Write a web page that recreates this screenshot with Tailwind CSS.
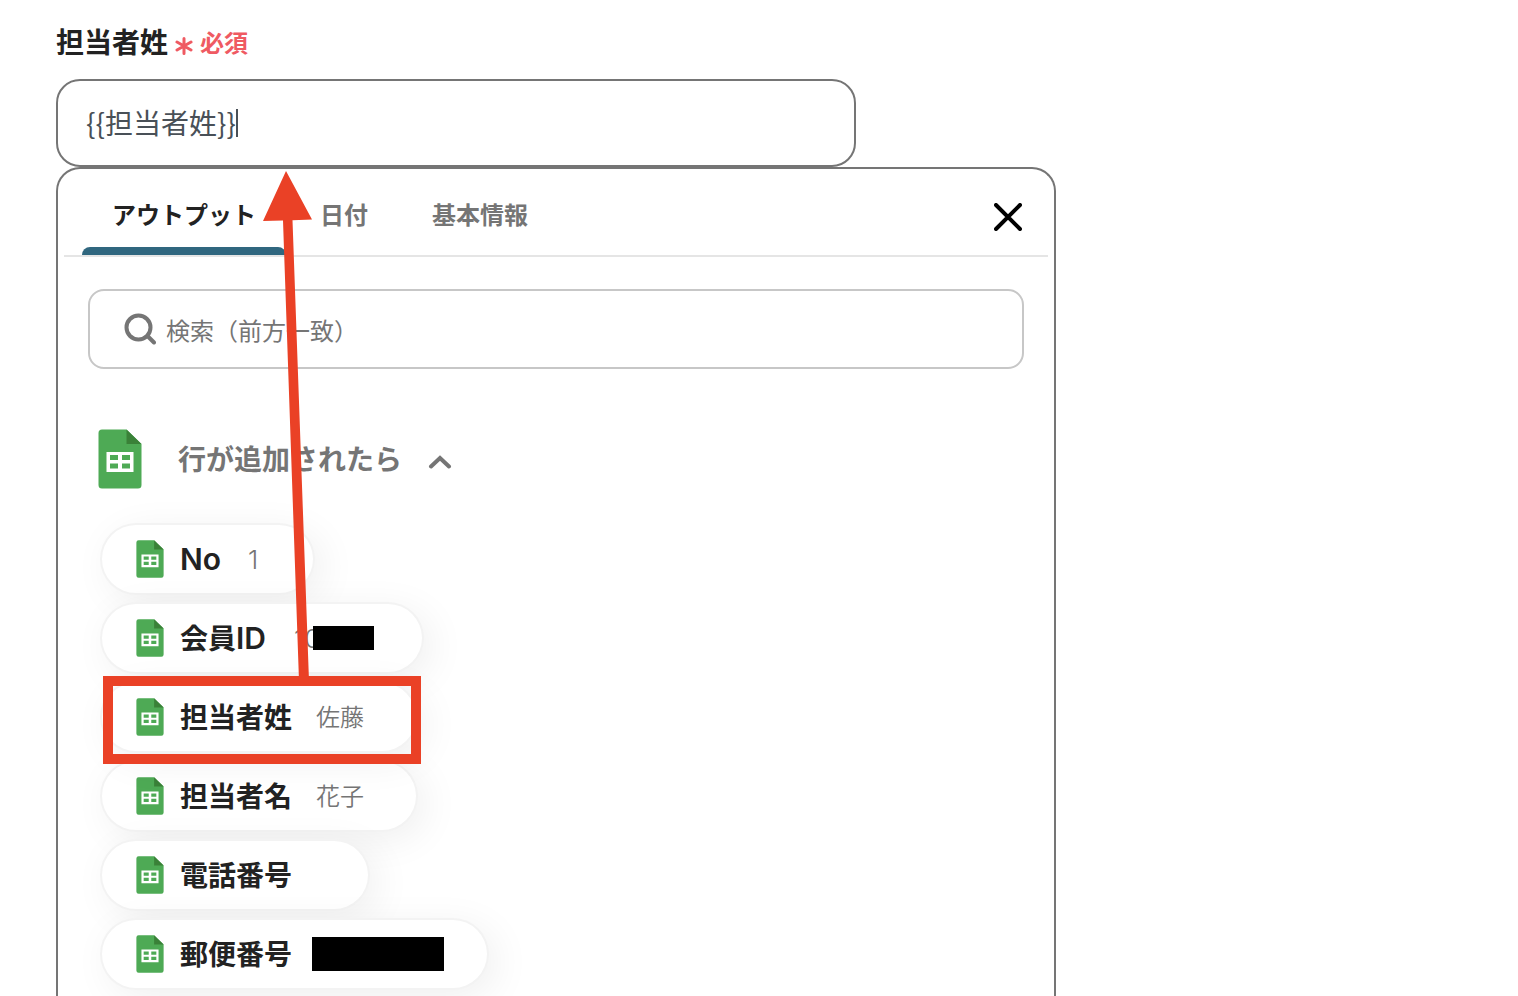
<!DOCTYPE html>
<html lang="ja">
<head>
<meta charset="utf-8">
<title>担当者姓</title>
<script src="https://cdn.jsdelivr.net/npm/@tailwindcss/browser@4"></script>
</head>
<body class="bg-white font-['Noto_Sans_CJK_JP',sans-serif] text-[#222]">
<svg class="hidden" aria-hidden="true">
  <symbol id="sheet" viewBox="0 0 44 60">
    <path fill="#4eaa55" d="M4 .5h24.500L43.500 15v41a3.500 3.500 0 0 1-3.500 3.500H4A3.500 3.500 0 0 1 .5 56V4A3.500 3.500 0 0 1 4 .5z"/>
    <path fill="#3a8138" d="M28.500.5L43.500 15h-15z"/>
    <path fill="#fff" fill-rule="evenodd" d="M8.500 23h27v20h-27zM12 26v5h8v-5zM24 26v5h8v-5zM12 34.500v5h8v-5zM24 34.500v5h8v-5z"/>
  </symbol>
</svg>
<main class="relative flex min-h-screen flex-col px-14 pt-[22px]">
  <label for="sei" class="flex h-[38px] items-center text-[28px] leading-[38px] font-bold">担当者姓
    <svg class="mt-2.5 ml-[7px] h-[18px] w-[18px]" viewBox="0 0 18 18" stroke="#ef5a62" stroke-width="3" stroke-linecap="round"><path d="M9 1.500v15M2 5l14 8M16 5L2 13"/></svg>
    <span class="ml-[7px] pt-0.5 text-2xl text-[#ef5a62]">必須</span>
  </label>
  <div class="relative mt-[19px] w-full max-w-[800px]">
    <input id="sei" type="text" value="{{担当者姓}}" class="block h-[88px] w-full rounded-3xl border-2 border-[#757575] pr-7 pb-0.5 pl-7 text-[28px] text-[#495057] outline-none">
    <span class="absolute top-[30px] left-[180px] h-7 w-0.5 bg-[#495057]"></span>
  </div>

  <section class="w-full max-w-[1000px] grow rounded-t-3xl border-2 border-b-0 border-[#757575] pb-2">
    <div class="mx-1.5 flex h-[88px] items-stretch border-b-2 border-[#e5e5e5] pl-4 text-2xl font-bold text-[#757575]" role="tablist">
      <button role="tab" aria-selected="true" class="relative px-8 pt-1 text-[#222]">
        <span>アウトプット</span>
        <span class="absolute inset-x-0.5 bottom-0 h-2 rounded-t-lg bg-[#30677f]"></span>
      </button>
      <button role="tab" aria-selected="false" class="px-8 pt-1">日付</button>
      <button role="tab" aria-selected="false" class="px-8 pt-1">基本情報</button>
      <button aria-label="閉じる" class="mr-5 ml-auto flex w-10 items-center justify-center pt-2.5">
        <svg class="h-7 w-7" viewBox="0 0 28 28" stroke="#000" stroke-width="4" stroke-linecap="round"><path d="M2 2l24 24M26 2L2 26"/></svg>
      </button>
    </div>

    <div class="relative mx-[30px] mt-8">
      <svg class="absolute top-6 left-9 h-8 w-8" viewBox="0 0 32 32" fill="none" stroke="#757575" stroke-width="4" stroke-linecap="round"><circle cx="14.500" cy="14.500" r="12"/><path d="M23.500 23l6.500 6.500"/></svg>
      <input type="search" aria-label="検索" placeholder="検索（前方一致）" class="block h-20 w-full rounded-2xl border-2 border-[#c7c7c7] pr-8 pl-[76px] text-2xl placeholder:text-[#757575]">
    </div>

    <button class="mt-[60px] ml-10 flex h-[60px] items-center text-[28px] font-bold text-[#757575]" aria-expanded="true">
      <svg class="h-[60px] w-11"><use href="#sheet"/></svg>
      <span class="ml-9 pb-0.5">行が追加されたら</span>
      <svg class="mt-1.5 ml-[26px] h-3.5 w-6" viewBox="0 0 24 14" fill="none" stroke="#757575" stroke-width="4" stroke-linecap="round" stroke-linejoin="miter"><path d="M3 11.500l9-8.500 9 8.500"/></svg>
    </button>

    <ul class="mt-9 ml-11 flex flex-col items-start gap-[11px] text-[28px] font-bold">
      <li><button class="flex h-[68px] items-center rounded-full bg-white pr-[52px] pl-[34px] shadow-[0_0_0_2px_#f3f3f3,8px_8px_40px_rgba(0,0,0,0.07)]">
        <svg class="h-[38px] w-7"><use href="#sheet"/></svg><span class="ml-4 font-[Inter] text-3xl font-semibold">No</span><span class="ml-6 w-4 text-center font-[Inter] text-[26px] font-light text-[#757575]">1</span></button></li>
      <li><button class="relative flex h-[68px] items-center rounded-full bg-white pr-[52px] pl-[34px] shadow-[0_0_0_2px_#f3f3f3,8px_8px_40px_rgba(0,0,0,0.07)]">
        <svg class="h-[38px] w-7"><use href="#sheet"/></svg><span class="ml-4 pb-0.5">会員<span class="font-[Inter] text-3xl leading-none font-semibold">ID</span></span><span class="ml-7 w-[76px] text-left font-[Inter] text-[26px] font-light text-[#757575]">10</span>
        <span class="absolute top-[22px] right-12 h-6 w-[61px] bg-black"></span></button></li>
      <li><button class="relative flex h-[68px] items-center rounded-full bg-white pr-[52px] pl-[34px] shadow-[0_0_0_2px_#f3f3f3,8px_8px_40px_rgba(0,0,0,0.07)]">
        <svg class="h-[38px] w-7"><use href="#sheet"/></svg><span class="ml-4 pb-0.5">担当者姓</span><span class="ml-6 pb-0.5 text-2xl font-[350] text-[#757575]">佐藤</span>
        <span class="absolute top-[-7px] -right-[5px] left-px z-10 h-[88px] border-10 border-[#ea4126]"></span></button></li>
      <li><button class="flex h-[68px] items-center rounded-full bg-white pr-[52px] pl-[34px] shadow-[0_0_0_2px_#f3f3f3,8px_8px_40px_rgba(0,0,0,0.07)]">
        <svg class="h-[38px] w-7"><use href="#sheet"/></svg><span class="ml-4 pb-0.5">担当者名</span><span class="ml-6 pb-0.5 text-2xl font-[350] text-[#757575]">花子</span></button></li>
      <li><button class="flex h-[68px] items-center rounded-full bg-white pr-[76px] pl-[34px] shadow-[0_0_0_2px_#f3f3f3,8px_8px_40px_rgba(0,0,0,0.07)]">
        <svg class="h-[38px] w-7"><use href="#sheet"/></svg><span class="ml-4 pb-0.5">電話番号</span></button></li>
      <li><button class="flex h-[68px] items-center rounded-full bg-white pr-[43px] pl-[34px] shadow-[0_0_0_2px_#f3f3f3,8px_8px_40px_rgba(0,0,0,0.07)]">
        <svg class="h-[38px] w-7"><use href="#sheet"/></svg><span class="ml-4 pb-0.5">郵便番号</span><span class="ml-5 h-[34px] w-[132px] bg-black"></span></button></li>
    </ul>
  </section>

  <svg class="pointer-events-none absolute top-[171px] left-[263px] z-20 h-[510px] w-[50px]" viewBox="0 0 50 510" fill="#ea4126" aria-hidden="true"><path d="M23 0L49 48.500l-19.500.7L46 510H36L20 49.600 0 50z"/></svg>
</main>
</body>
</html>
